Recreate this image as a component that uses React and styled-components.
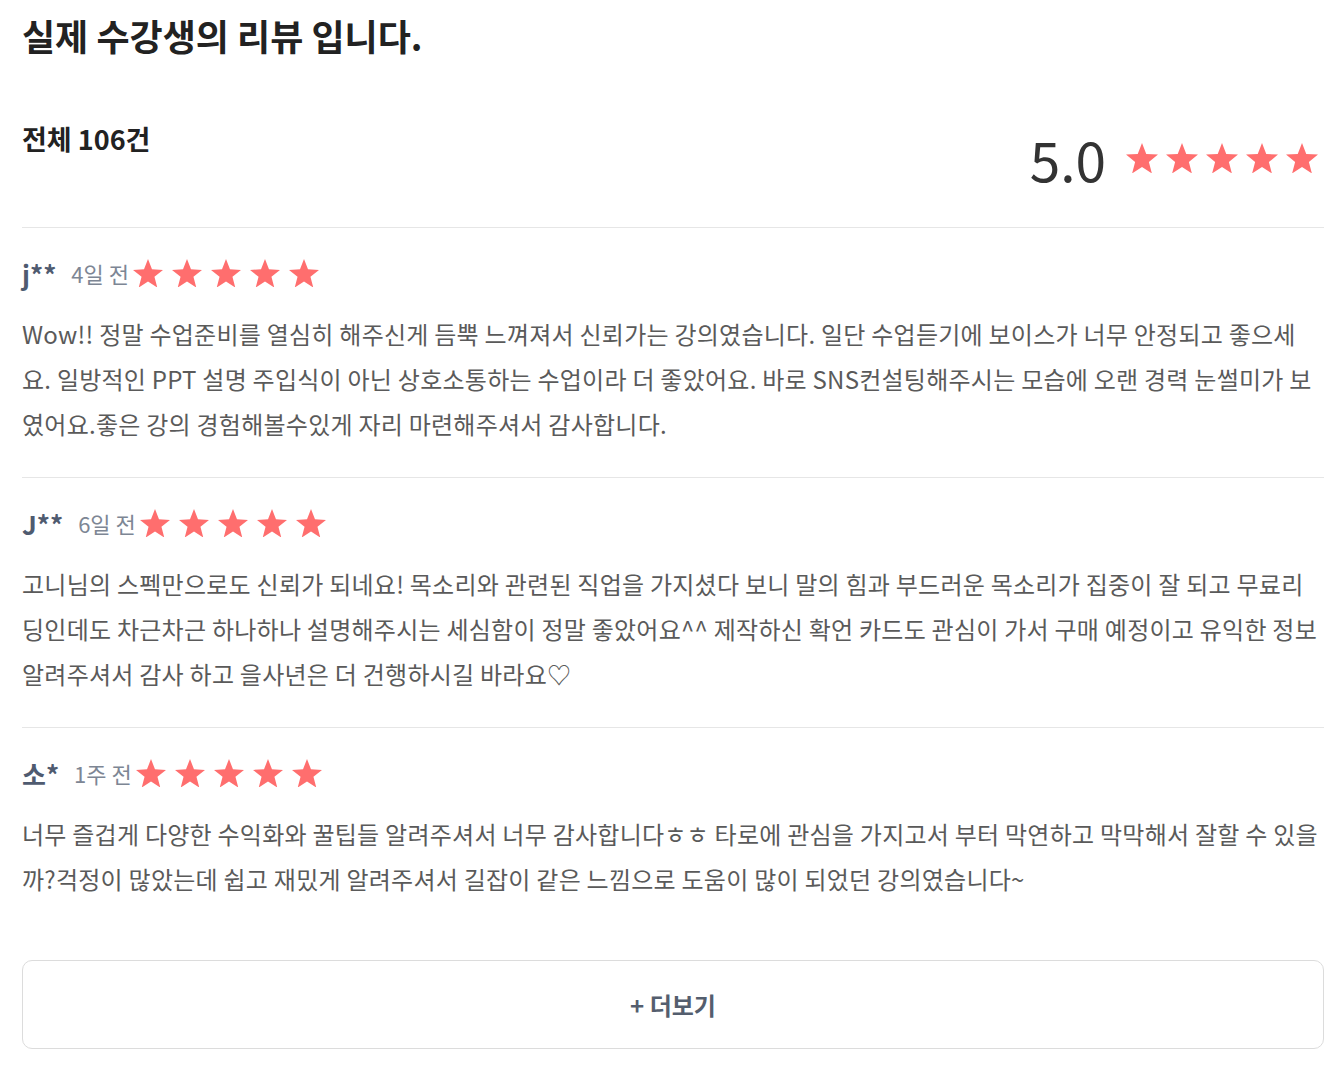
import React from 'react';
import styled, { createGlobalStyle } from 'styled-components';

const GlobalStyle = createGlobalStyle`
  body {
    margin: 0;
    background: #fff;
    font-family: "Noto Sans CJK KR", "Noto Sans", sans-serif;
  }
`;

const reviews = [
  {
    name: 'j**',
    date: '4일 전',
    text: 'Wow!! 정말 수업준비를 열심히 해주신게 듬뿍 느껴져서 신뢰가는 강의였습니다. 일단 수업듣기에 보이스가 너무 안정되고 좋으세요. 일방적인 PPT 설명 주입식이 아닌 상호소통하는 수업이라 더 좋았어요. 바로 SNS컨설팅해주시는 모습에 오랜 경력 눈썰미가 보였어요.좋은 강의 경험해볼수있게 자리 마련해주셔서 감사합니다.',
  },
  {
    name: 'J**',
    date: '6일 전',
    text: '고니님의 스펙만으로도 신뢰가 되네요! 목소리와 관련된 직업을 가지셨다 보니 말의 힘과 부드러운 목소리가 집중이 잘 되고 무료리딩인데도 차근차근 하나하나 설명해주시는 세심함이 정말 좋았어요^^ 제작하신 확언 카드도 관심이 가서 구매 예정이고 유익한 정보 알려주셔서 감사 하고 을사년은 더 건행하시길 바라요♡',
  },
  {
    name: '소*',
    date: '1주 전',
    text: '너무 즐겁게 다양한 수익화와 꿀팁들 알려주셔서 너무 감사합니다ㅎㅎ 타로에 관심을 가지고서 부터 막연하고 막막해서 잘할 수 있을까?걱정이 많았는데 쉽고 재밌게 알려주셔서 길잡이 같은 느낌으로 도움이 많이 되었던 강의였습니다~',
  },
];

const Star = ({ size }) => (
  <StarSvg width={size} height={size * 0.951} viewBox="0 0 95.1 90.45">
    <path d="M47.55 0 L60.19 32.61 L95.1 34.55 L68 56.64 L76.94 90.45 L47.55 71.5 L18.16 90.45 L27.1 56.64 L0 34.55 L34.91 32.61 Z" />
  </StarSvg>
);

const Stars = ({ size, gap }) => (
  <StarRow $gap={gap}>
    {[0, 1, 2, 3, 4].map((i) => (
      <Star key={i} size={size} />
    ))}
  </StarRow>
);

export default function App() {
  return (
    <Page>
      <GlobalStyle />
      <Title>실제 수강생의 리뷰 입니다.</Title>
      <Summary>
        <TotalCount>전체 106건</TotalCount>
        <RatingGroup>
          <Score>5.0</Score>
          <Stars size={32} gap={8} />
        </RatingGroup>
      </Summary>
      {reviews.map((r, i) => (
        <ReviewItem key={r.name} $last={i === reviews.length - 1}>
          <ReviewHeader>
            <Name>{r.name}</Name>
            <DateText>{r.date}</DateText>
            <Stars size={30} gap={9} />
          </ReviewHeader>
          <Body>{r.text}</Body>
        </ReviewItem>
      ))}
      <MoreButton type="button">+ 더보기</MoreButton>
    </Page>
  );
}

const Page = styled.div`
  padding: 12px 10px 20px 22px;
`;

const Title = styled.h1`
  margin: 0;
  font-size: 36px;
  line-height: 47px;
  font-weight: 700;
  color: #222;
`;

const Summary = styled.div`
  display: flex;
  justify-content: space-between;
  align-items: flex-start;
  margin-top: 62px;
  padding-bottom: 41px;
  border-bottom: 1px solid #e6e6e6;
`;

const TotalCount = styled.div`
  font-size: 27px;
  line-height: 36px;
  font-weight: 700;
  color: #222;
`;

const RatingGroup = styled.div`
  display: flex;
  align-items: center;
  gap: 20px;
  margin-top: 9px;
  padding-right: 6px;
`;

const Score = styled.div`
  font-size: 55px;
  line-height: 56px;
  color: #333;
`;

const StarRow = styled.div`
  display: flex;
  align-items: center;
  gap: ${(p) => p.$gap}px;
`;

const StarSvg = styled.svg`
  display: block;
  fill: #ff6e6e;
`;

const ReviewItem = styled.div`
  padding: 30px 0 ${(p) => (p.$last ? 30 : 31)}px;
  border-bottom: ${(p) => (p.$last ? 'none' : '1px solid #e6e6e6')};
`;

const ReviewHeader = styled.div`
  display: flex;
  align-items: center;
  height: 30px;
`;

const Name = styled.span`
  font-size: 26px;
  font-weight: 700;
  color: #4f5b70;
  margin-right: 15px;
`;

const DateText = styled.span`
  font-size: 22px;
  color: #7d8694;
  margin-right: 4px;
`;

const Body = styled.p`
  margin: 23px 0 0;
  font-size: 24px;
  line-height: 45px;
  letter-spacing: 0.25px;
  color: #5a5a5a;
`;

const MoreButton = styled.button`
  display: block;
  width: 100%;
  height: 89px;
  margin-top: 29px;
  background: #fff;
  border: 1px solid #dcdcdc;
  border-radius: 10px;
  font-family: inherit;
  font-size: 24px;
  font-weight: 700;
  color: #545e6e;
  cursor: pointer;
`;
